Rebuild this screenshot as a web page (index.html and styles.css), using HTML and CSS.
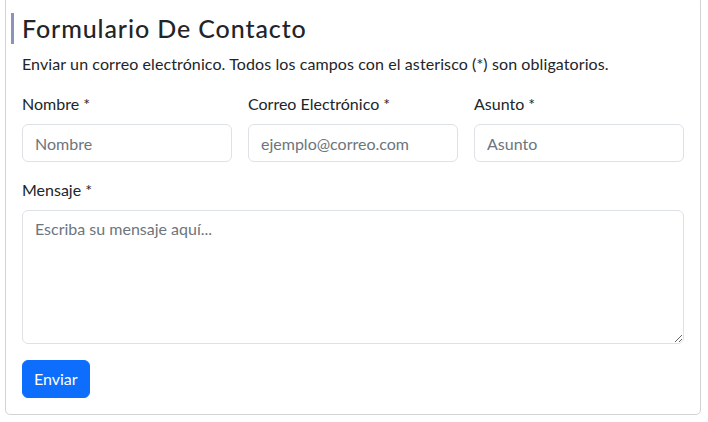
FILE: index.html
```html
<!DOCTYPE html>
<html lang="es">
<head>
<meta charset="utf-8">
<title>Formulario De Contacto</title>
<link rel="stylesheet" href="styles.css">
</head>
<body>
<div class="card">
  <h4 class="title">Formulario De Contacto</h4>
  <p class="intro">Enviar un correo electrónico. Todos los campos con el asterisco (*) son obligatorios.</p>
  <form class="form">
    <div class="row">
      <div class="field">
        <label class="label" for="nombre">Nombre *</label>
        <input class="control" id="nombre" type="text" placeholder="Nombre">
      </div>
      <div class="field">
        <label class="label" for="correo">Correo Electrónico *</label>
        <input class="control" id="correo" type="email" placeholder="ejemplo@correo.com">
      </div>
      <div class="field">
        <label class="label" for="asunto">Asunto *</label>
        <input class="control" id="asunto" type="text" placeholder="Asunto">
      </div>
    </div>
    <div class="field message">
      <label class="label" for="mensaje">Mensaje *</label>
      <textarea class="control area" id="mensaje" rows="5" placeholder="Escriba su mensaje aquí..."></textarea>
    </div>
    <button class="btn" type="button">Enviar</button>
  </form>
</div>
</body>
</html>
```

FILE: styles.css
```css
* { box-sizing: border-box; }
html, body { margin: 0; padding: 0; background: #fff; }
body {
  font-family: "Segoe UI", Lato, "Noto Sans", sans-serif;
  font-size: 16px;
  line-height: 1.5;
  color: #212529;
  padding: 0 7px 0 5px;
}
.card {
  margin-top: -4px;
  border: 1px solid #d3d3d3;
  border-radius: 5px;
  padding: 16px;
}
.title {
  margin: 0 0 8px -11px;
  padding: 1px 0 1px 8px;
  border-left: 3px solid #8a93bd;
  font-size: 25px;
  font-weight: 500;
  letter-spacing: 0.9px;
  line-height: 29px;
}
.intro { margin: 0 0 16px; letter-spacing: 0.1px; }
.row {
  display: grid;
  grid-template-columns: repeat(3, 1fr);
  gap: 16px;
}
.field { display: flex; flex-direction: column; }
.message { margin-top: 16px; }
.label { margin-bottom: 8px; }
.control {
  font: inherit;
  color: #212529;
  height: 38px;
  padding: 6px 12px;
  border: 1px solid #dee2e6;
  border-radius: 6px;
  background: #fff;
  width: 100%;
}
.control::placeholder { color: #6c757d; opacity: 1; }
.area { height: 134px; resize: vertical; }
.btn {
  margin-top: 16px;
  font: inherit;
  color: #fff;
  background: #0d6efd;
  border: 1px solid #0d6efd;
  border-radius: 6px;
  padding: 6px 11px;
  height: 38px;
}
```
